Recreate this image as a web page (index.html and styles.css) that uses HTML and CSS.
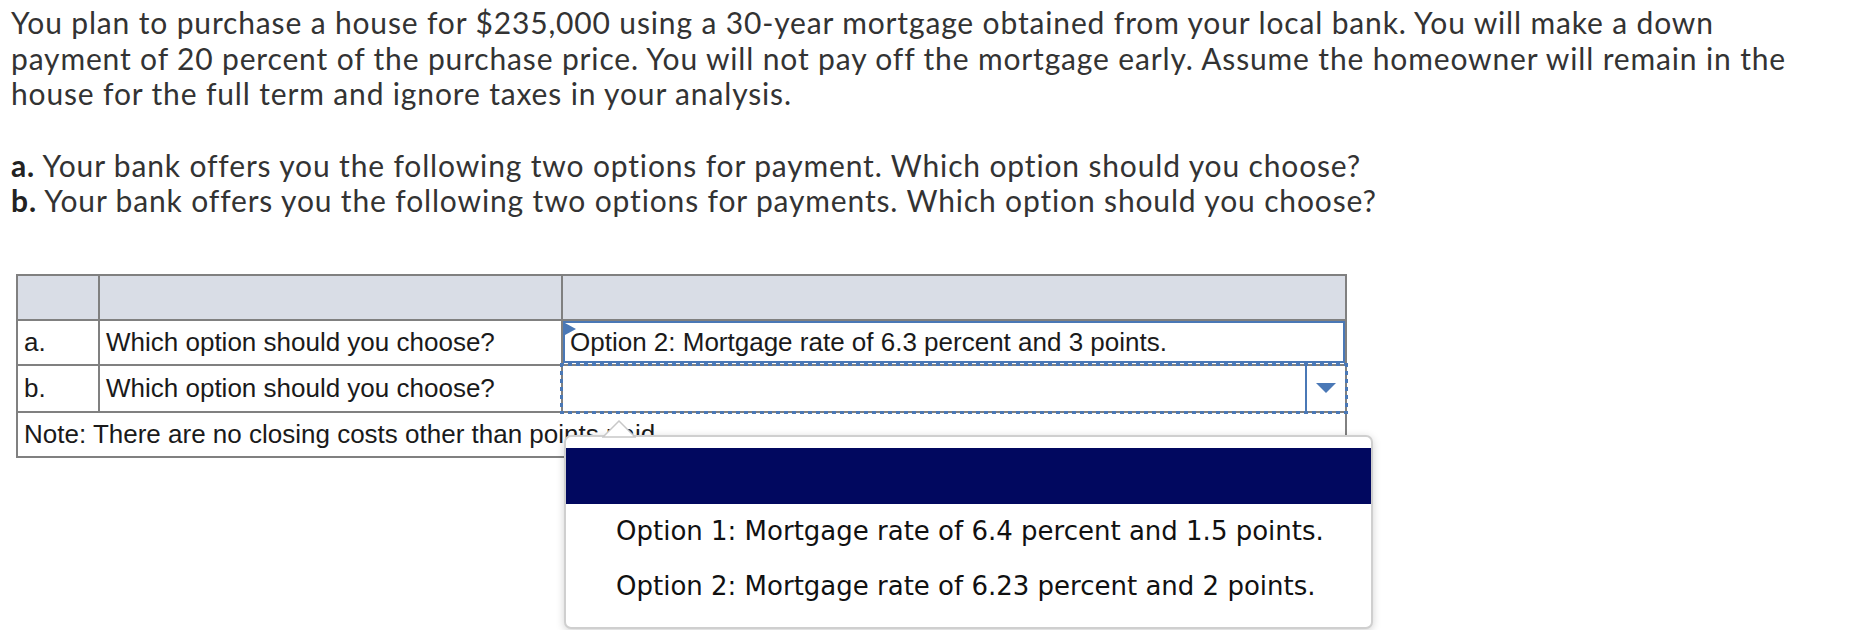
FILE: index.html
```html
<!DOCTYPE html>
<html>
<head>
<meta charset="utf-8" />
<title>Mortgage options</title>
<link rel="stylesheet" href="styles.css">
</head>
<body>
<div class="question">
	<p class="intro">You plan to purchase a house for $235,000 using a 30-year mortgage obtained from your local bank. You will make a down payment of 20 percent of the purchase price. You will not pay off the mortgage early. Assume the homeowner will remain in the house for the full term and ignore taxes in your analysis.</p>
	<p class="parts">
		<span><b>a.</b> Your bank offers you the following two options for payment. Which option should you choose?</span>
		<span><b>b.</b> Your bank offers you the following two options for payments. Which option should you choose?</span>
	</p>
</div>

<table class="answers">
	<colgroup>
		<col class="c-label">
		<col class="c-ask">
		<col class="c-pick">
	</colgroup>
	<tr class="head">
		<td></td>
		<td></td>
		<td></td>
	</tr>
	<tr>
		<td>a.</td>
		<td>Which option should you choose?</td>
		<td class="pick">
			<div class="chosen">
				<span class="flag"></span>
				Option 2: Mortgage rate of 6.3 percent and 3 points.
			</div>
		</td>
	</tr>
	<tr>
		<td>b.</td>
		<td>Which option should you choose?</td>
		<td class="pick">
			<div class="select">
				<span class="value"></span>
				<span class="caret"><svg width="20" height="10" viewBox="0 0 20 10"><polygon points="0,0 20,0 10,10" fill="#4a78b6"/></svg></span>
				<div class="menu">
					<svg class="menu-tip" width="34" height="18" viewBox="0 0 34 18"><polygon points="1,17 17,1 33,17" fill="#fff" stroke="#c8c8c8" stroke-width="1.5"/></svg>
					<div class="menu-head"></div>
					<ul>
						<li>Option 1: Mortgage rate of 6.4 percent and 1.5 points.</li>
						<li>Option 2: Mortgage rate of 6.23 percent and 2 points.</li>
					</ul>
				</div>
			</div>
		</td>
	</tr>
	<tr>
		<td colspan="3">Note: There are no closing costs other than points paid.</td>
	</tr>
</table>
</body>
</html>
```

FILE: styles.css
```css
html,body,p,ul{margin:0;padding:0;}
body{background:#fff;min-height:630px;}

.question{padding:5px 0 0 11px;width:1808px;font-family:Lato, "Open Sans", sans-serif;font-size:30px;letter-spacing:0.85px;line-height:35.5px;color:#333;}
.intro{margin-bottom:36px;}
.parts span{display:block;}
.parts b{font-weight:700;color:#222;}

.answers{border-collapse:collapse;margin:55px 0 0 16px;table-layout:fixed;width:1331px;font-family:"Liberation Sans", Arial, sans-serif;font-size:26px;color:#1a1a1a;}
.answers td{border:2px solid #808080;height:43px;padding:0 6px;white-space:nowrap;}
.c-label{width:82px;}
.c-ask{width:463px;}
.head td{background:#d9dde6;}
.answers td.pick{padding:0;position:relative;}

.chosen{position:relative;height:42px;border:2px solid #4a78b6;box-sizing:border-box;padding:4px 0 0 5px;line-height:30px;}
.flag{position:absolute;left:0;top:0;width:0;height:0;border-top:6px solid transparent;border-bottom:6px solid transparent;border-left:11px solid #4a78b6;}

/* focus ring of the open dropdown: square dots like the original */
.select{position:relative;height:45px;display:flex;}
.select:before{content:"";position:absolute;left:-3px;top:-3px;right:-3px;bottom:-3px;
	background:
		repeating-linear-gradient(90deg,#4a78b6 0 4px,transparent 4px 8px) left top/100% 3px no-repeat,
		repeating-linear-gradient(90deg,#4a78b6 0 4px,transparent 4px 8px) left bottom/100% 3px no-repeat,
		repeating-linear-gradient(180deg,#4a78b6 0 4px,transparent 4px 8px) left top/3px 100% no-repeat,
		repeating-linear-gradient(180deg,#4a78b6 0 4px,transparent 4px 8px) right top/3px 100% no-repeat;}
.value{flex:1;}
.caret{width:38px;border-left:2px solid #4a78b6;display:flex;align-items:center;justify-content:center;}
.caret svg{display:block;}

.menu{position:absolute;left:1px;top:69px;width:809px;height:194px;box-sizing:border-box;background:#fff;border:2px solid #cfcfcf;border-radius:7px;box-shadow:0 2px 8px rgba(0,0,0,0.18);padding-top:11px;font-family:"DejaVu Sans", Verdana, sans-serif;font-size:26px;color:#111;}
.menu-tip{position:absolute;left:36px;top:-17px;}
.menu-head{height:56px;background:#01085f;}
.menu ul{list-style:none;}
.menu li{height:55px;line-height:55px;padding-left:50px;}
```
